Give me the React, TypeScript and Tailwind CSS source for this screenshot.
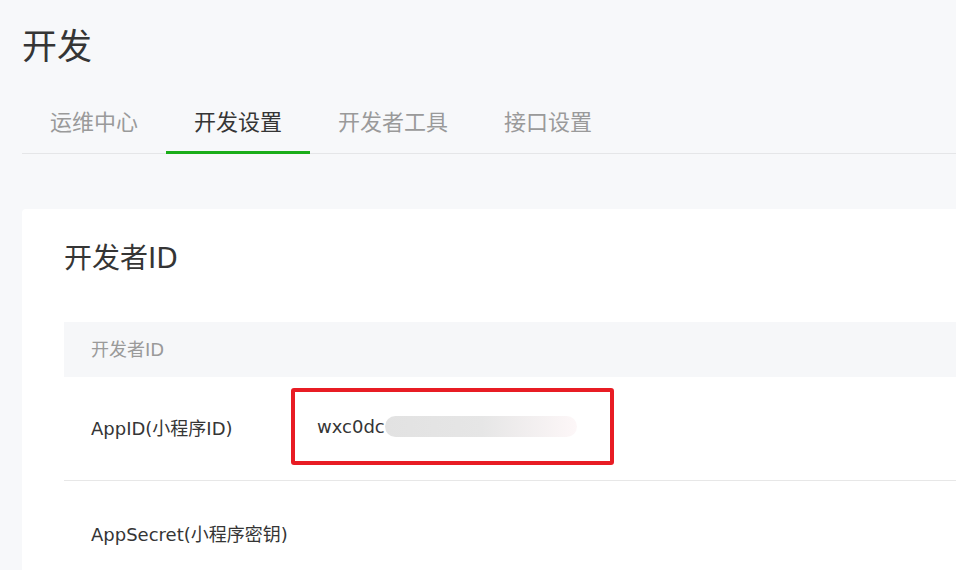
const font = { fontFamily: '"DejaVu Sans", "Noto Sans CJK SC", sans-serif' };

const tabs = ['运维中心', '开发设置', '开发者工具', '接口设置'];

export default function App() {
  const active = 1;
  return (
    <div className="h-[570px] w-[956px] overflow-hidden bg-[#f7f8fa] pl-[22px] text-[#353535]" style={font}>
      <h1 className="pt-[24px] text-[35px] leading-[46px]">开发</h1>

      <div className="mt-[37px] flex border-b border-[#e5e6e8]">
        {tabs.map((t, i) => (
          <div
            key={t}
            className={
              'px-[28px] pb-[12px] text-[22px] leading-[32px] ' +
              (i === active ? 'border-b-[3px] border-[#1aad19] -mb-px text-[#353535]' : 'border-b-[3px] border-transparent -mb-px text-[#9a9a9a]')
            }
          >
            {t}
          </div>
        ))}
      </div>

      <div className="mt-[55px] rounded-tl-[4px] bg-white pl-[42px]">
        <h2 className="pt-[34px] text-[28px] leading-[32px]">开发者ID</h2>

        <div className="mt-[47px]">
          <div className="flex h-[55px] items-center bg-[#f6f7f9] pl-[27px] text-[18px] text-[#9a9a9a]">开发者ID</div>

          <div className="flex h-[104px] items-center border-b border-[#e7e7e7] pl-[27px] text-[18px]">
            <div className="w-[200px]">AppID(小程序ID)</div>
            <div className="mb-[5px] flex h-[77px] w-[323px] items-center rounded-[3px] border-[4px] border-[#e81c24] pl-[22px]">
              <span>wxc0dc</span>
              <span className="h-[21px] w-[192px] rounded-full bg-gradient-to-r from-[#e2e2e2] via-[#e6e6e6] to-[#fdf7f8]" />
            </div>
          </div>

          <div className="flex h-[106px] items-center pl-[27px] text-[18px]">
            <div>AppSecret(小程序密钥)</div>
          </div>
        </div>
      </div>
    </div>
  );
}
